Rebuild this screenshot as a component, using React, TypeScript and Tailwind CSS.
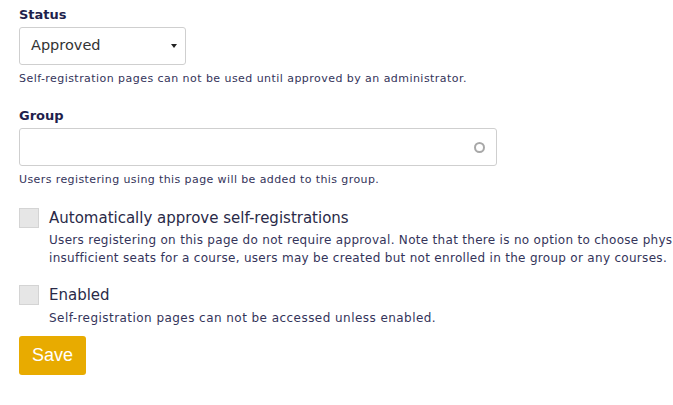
import React from "react";

const font = { fontFamily: '"DejaVu Sans", "Noto Sans", sans-serif' };

function Checkbox() {
  return <div className="w-[20px] h-[20px] shrink-0 bg-[#e6e6e6] border border-[#d4d4d4]" />;
}

export default function App() {
  return (
    <div className="w-[673px] h-[405px] overflow-hidden bg-white" style={font}>
      <div className="w-[900px] pl-[19px] pt-[5px]">
        {/* Status */}
        <div className="text-[13px] font-bold leading-[20px] text-[#1f1f4d]">Status</div>
        <div className="mt-[2px] w-[167px] h-[38px] border border-[#cfcfcf] rounded-[3px] flex items-center justify-between pl-[11px] pr-[6px]">
          <span className="text-[14.5px] text-[#333]">Approved</span>
          <svg width="10" height="6" viewBox="0 0 10 6">
            <path d="M2 1 L8 1 L5 5 Z" fill="#222" />
          </svg>
        </div>
        <p className="mt-[6px] text-[11px] leading-[16px] tracking-[0.45px] text-[#34345a]">
          Self-registration pages can not be used until approved by an administrator.
        </p>

        {/* Group */}
        <div className="mt-[19px] text-[13px] font-bold leading-[20px] text-[#1f1f4d]">Group</div>
        <div className="mt-[2px] w-[478px] h-[38px] border border-[#cfcfcf] rounded-[3px] flex items-center justify-end pr-[11px]">
          <div className="w-[11px] h-[11px] rounded-full border-2 border-[#a8a8a8]" />
        </div>
        <p className="mt-[6px] text-[11px] leading-[16px] tracking-[0.4px] text-[#34345a]">
          Users registering using this page will be added to this group.
        </p>

        {/* Auto approve */}
        <div className="mt-[20px] flex gap-[10px]">
          <Checkbox />
          <div>
            <div className="text-[15px] leading-[20px] text-[#2a2a48]">Automatically approve self-registrations</div>
            <div className="mt-[3px] text-[12px] leading-[18px] tracking-[0.3px] text-[#34345a] whitespace-nowrap">
              <div>Users registering on this page do not require approval. Note that there is no option to choose physical seats. If there are</div>
              <div>insufficient seats for a course, users may be created but not enrolled in the group or any courses.</div>
            </div>
          </div>
        </div>

        {/* Enabled */}
        <div className="mt-[18px] flex gap-[10px]">
          <Checkbox />
          <div>
            <div className="text-[15px] leading-[20px] text-[#2a2a48]">Enabled</div>
            <div className="mt-[4px] text-[12px] leading-[18px] tracking-[0.45px] text-[#34345a]">
              Self-registration pages can not be accessed unless enabled.
            </div>
          </div>
        </div>

        <button
          className="mt-[9px] w-[67px] h-[39px] rounded-[3px] bg-[#e8ab00] text-white text-[18px] flex items-center justify-center"
          style={{ fontFamily: '"Liberation Sans", Arial, sans-serif' }}
        >
          Save
        </button>
      </div>
    </div>
  );
}
